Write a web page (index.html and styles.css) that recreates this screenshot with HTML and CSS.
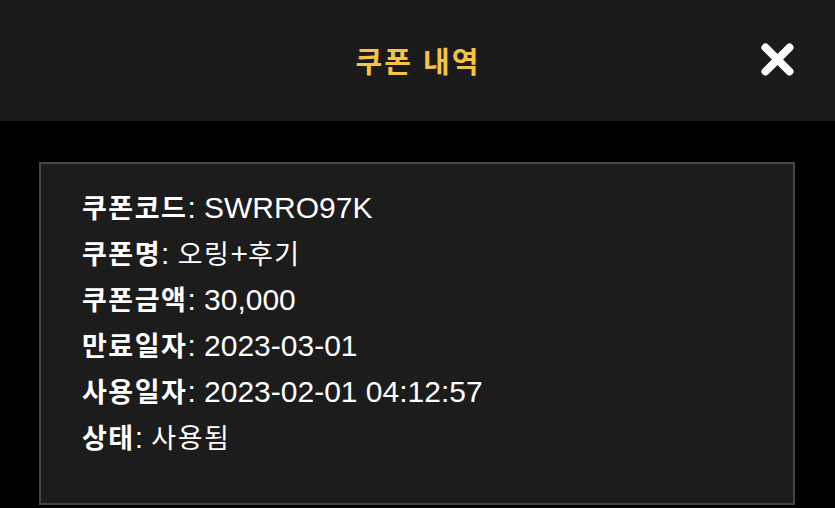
FILE: index.html
```html
<!DOCTYPE html>
<html lang="ko">
<head>
<meta charset="utf-8">
<title>쿠폰 내역</title>
<link rel="stylesheet" href="styles.css">
</head>
<body>
<header class="top-bar">
  <div class="spacer"></div>
  <h1 class="title">쿠폰 내역</h1>
  <button class="close" aria-label="닫기">
    <svg width="33" height="33" viewBox="0 0 33 33"><path d="M4.5 4.5 L28.5 28.5 M28.5 4.5 L4.5 28.5" stroke="#ffffff" stroke-width="8" stroke-linecap="round" fill="none"/></svg>
  </button>
</header>
<main class="content">
  <section class="card">
    <div class="row"><span class="label ko">쿠폰코드</span><span class="value">: SWRRO97K</span></div>
    <div class="row"><span class="label ko">쿠폰명</span><span class="value">: <span class="ko">오링</span>+<span class="ko">후기</span></span></div>
    <div class="row"><span class="label ko">쿠폰금액</span><span class="value">: 30,000</span></div>
    <div class="row"><span class="label ko">만료일자</span><span class="value">: 2023-03-01</span></div>
    <div class="row"><span class="label ko">사용일자</span><span class="value">: 2023-02-01 04:12:57</span></div>
    <div class="row"><span class="label ko">상태</span><span class="value">: <span class="ko">사용됨</span></span></div>
  </section>
</main>
</body>
</html>
```
FILE: styles.css
```css
* { box-sizing: border-box; }
html, body {
  margin: 0;
  padding: 0;
  background: #000000;
  height: 100%;
  overflow: hidden;
}
body {
  font-family: "Liberation Sans", "Noto Sans CJK KR", sans-serif;
  color: #ffffff;
}
.top-bar {
  height: 121px;
  background: #1b1b1b;
  display: grid;
  grid-template-columns: 1fr auto 1fr;
  align-items: center;
}
.title {
  margin: 0;
  font-family: "Noto Sans CJK KR", sans-serif;
  font-weight: 700;
  font-size: 29px;
  line-height: 1;
  letter-spacing: 2px;
  color: #f5c444;
  padding-left: 1px;
}
.close {
  justify-self: end;
  margin-right: 41px;
  margin-top: -3px;
  width: 33px;
  height: 33px;
  padding: 0;
  border: 0;
  background: transparent;
  display: flex;
}
.content {
  padding: 41px 40px 0 39px;
}
.card {
  height: 343px;
  background: #1c1c1c;
  border: 2px solid #464646;
  padding: 20px 41px 0 41px;
}
.row {
  font-size: 30px;
  line-height: 46px;
  height: 46px;
  white-space: nowrap;
}
.ko {
  font-family: "Noto Sans CJK KR", sans-serif;
  font-size: 27px;
  letter-spacing: 1.5px;
}
.label {
  font-weight: 700;
}
.value {
  font-weight: 400;
}
```
